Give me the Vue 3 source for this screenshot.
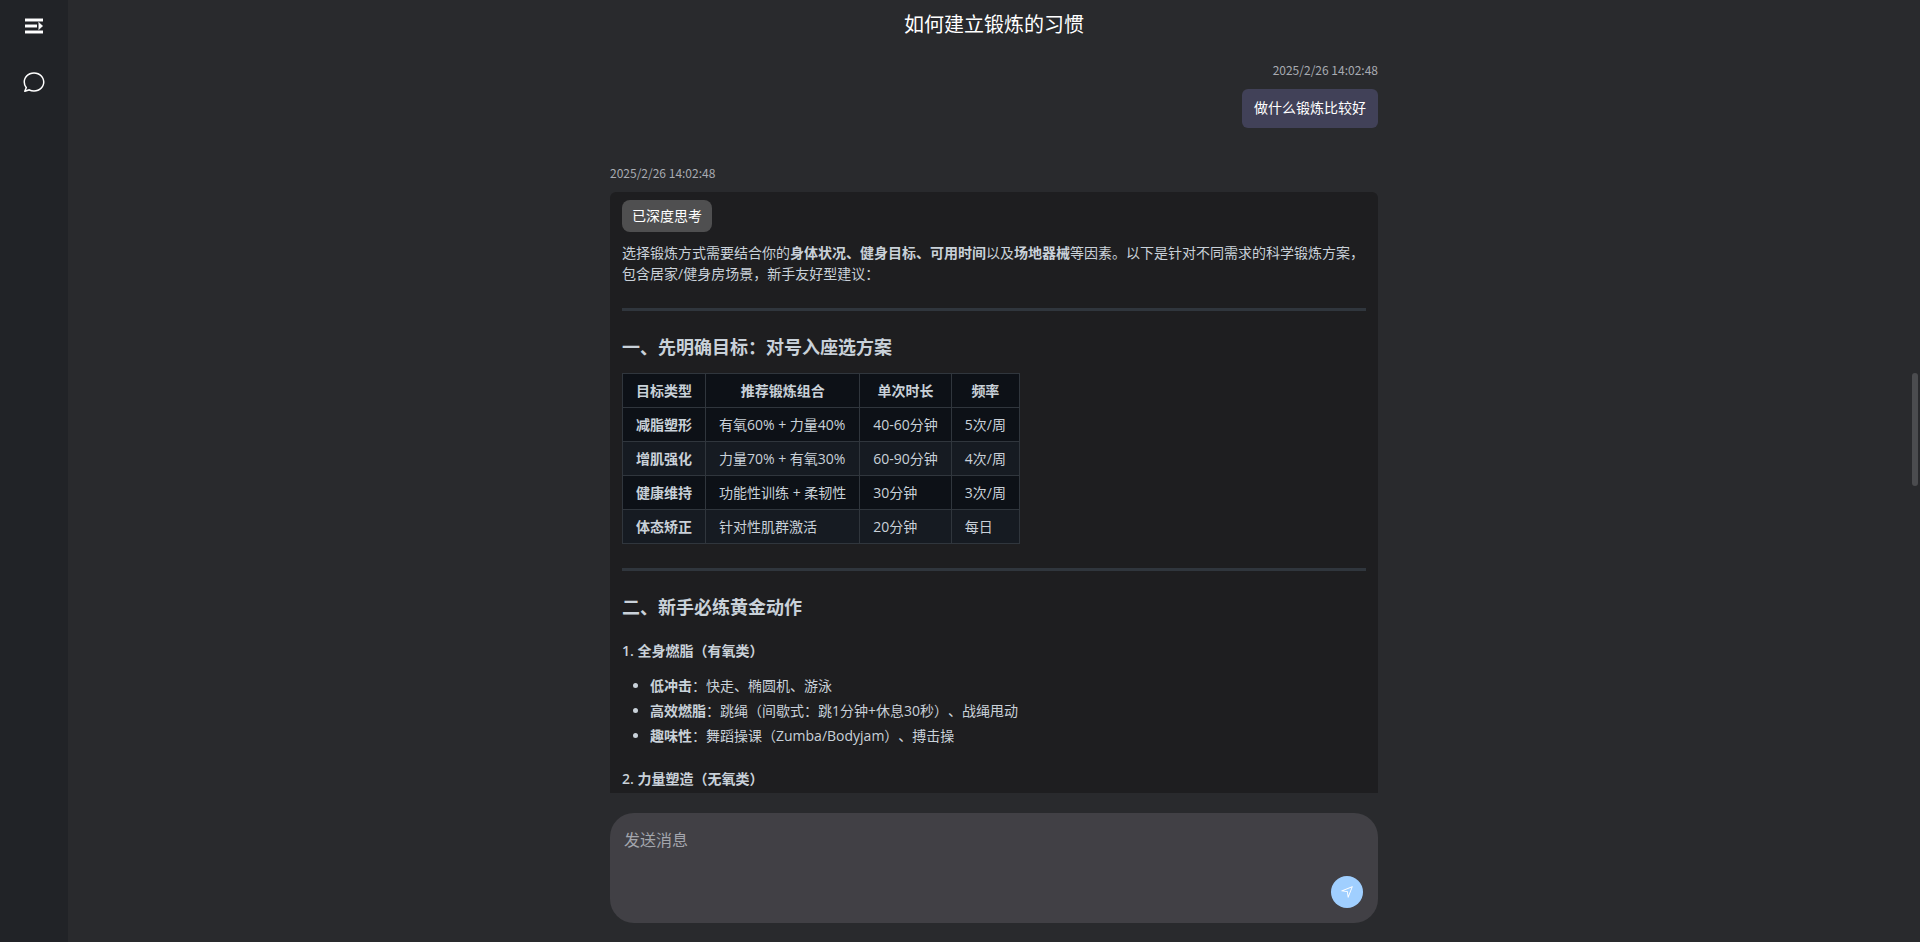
<script setup>
import { ref } from 'vue'

const message = ref('')
const headers = ['目标类型', '推荐锻炼组合', '单次时长', '频率']
const rows = [
  ['减脂塑形', '有氧60% + 力量40%', '40-60分钟', '5次/周'],
  ['增肌强化', '力量70% + 有氧30%', '60-90分钟', '4次/周'],
  ['健康维持', '功能性训练 + 柔韧性', '30分钟', '3次/周'],
  ['体态矫正', '针对性肌群激活', '20分钟', '每日']
]
const cardio = [
  ['低冲击', '快走、椭圆机、游泳'],
  ['高效燃脂', '跳绳（间歇式：跳1分钟+休息30秒）、战绳甩动'],
  ['趣味性', '舞蹈操课（Zumba/Bodyjam）、搏击操']
]
</script>

<template>
  <div class="layout">
    <nav class="sidebar">
      <button class="icon-button menu" type="button" aria-label="展开菜单">
        <svg width="18" height="16" viewBox="0 0 18 16" fill="#fff">
          <path d="M0 0h18v4H0zM0 6h12v4H0zM0 12h18v4H0z" fill="#8b8c8f" />
          <path d="M0 1h18v2H0zM0 7h12v2H0zM0 13h18v2H0z" />
          <path d="M13 4h1l4 4-4 4h-1z" fill="#8b8c8f" />
          <path d="M14 4.8 17.8 8 14 11.2z" />
        </svg>
      </button>
      <button class="icon-button" type="button" aria-label="对话">
        <svg width="24" height="24" viewBox="0 0 1024 1024" fill="#fff">
          <path d="m174.72 855.68 130.048-43.392 23.424 11.392C382.4 849.984 444.352 864 512 864c223.744 0 384-159.872 384-352 0-192.832-159.104-352-384-352S128 319.168 128 512a341.12 341.12 0 0 0 69.248 204.288l21.632 28.8-44.16 110.592zm-45.248 82.56A32 32 0 0 1 89.6 896l56.512-141.248A405.12 405.12 0 0 1 64 512C64 299.904 235.648 96 512 96s448 203.904 448 416-173.44 416-448 416c-79.68 0-150.848-17.152-211.712-46.72l-170.88 56.96z" />
        </svg>
      </button>
    </nav>

    <main class="main">
      <h1 class="title">如何建立锻炼的习惯</h1>

      <section class="scroll">
        <div class="column">
          <article class="message user">
            <time class="time">2025/2/26 14:02:48</time>
            <div class="bubble">做什么锻炼比较好</div>
          </article>

          <article class="message">
            <time class="time">2025/2/26 14:02:48</time>
            <div class="card">
              <button class="thought" type="button">已深度思考</button>
              <p>选择锻炼方式需要结合你的<strong>身体状况、健身目标、可用时间</strong>以及<strong>场地器械</strong>等因素。以下是针对不同需求的科学锻炼方案，包含居家/健身房场景，新手友好型建议：</p>
              <hr />
              <h3>一、先明确目标：对号入座选方案</h3>
              <table>
                <thead>
                  <tr>
                    <th v-for="h in headers" :key="h" scope="col">{{ h }}</th>
                  </tr>
                </thead>
                <tbody>
                  <tr v-for="row in rows" :key="row[0]">
                    <td v-for="(cell, i) in row" :key="i">
                      <strong v-if="i === 0">{{ cell }}</strong>
                      <template v-else>{{ cell }}</template>
                    </td>
                  </tr>
                </tbody>
              </table>
              <hr />
              <h3>二、新手必练黄金动作</h3>
              <h4>1. 全身燃脂（有氧类）</h4>
              <ul>
                <li v-for="item in cardio" :key="item[0]"><strong>{{ item[0] }}</strong>：{{ item[1] }}</li>
              </ul>
              <h4>2. 力量塑造（无氧类）</h4>
            </div>
          </article>
        </div>
      </section>

      <form class="composer" @submit.prevent>
        <textarea v-model="message" placeholder="发送消息" aria-label="发送消息"></textarea>
        <button class="send" type="submit" aria-label="发送">
          <svg width="14" height="14" viewBox="0 0 1024 1024" fill="#fff">
            <path d="m249.6 417.088 319.744 43.072 39.168 310.272L845.12 178.88 249.6 417.088zm-129.024 47.168a32 32 0 0 1-7.68-61.44l777.792-311.04a32 32 0 0 1 41.6 41.6l-310.336 775.68a32 32 0 0 1-61.44-7.808L512 516.992l-391.424-52.736z" />
          </svg>
        </button>
      </form>
      <div class="thumb"></div>
    </main>
  </div>
</template>

<style>
body {
  margin: 0;
  background: #292a2d;
}
</style>

<style scoped>
.layout {
  display: flex;
  height: 100vh;
  background: #292a2d;
  color: #c9d1d9;
  font-family: "Open Sans", "Noto Sans CJK SC", sans-serif;
  font-size: 14px;
  line-height: 21px;
  text-spacing-trim: space-all;
}
button,
textarea {
  border: 0;
  padding: 0;
  font-family: inherit;
}
svg {
  display: block;
}
.sidebar {
  flex: none;
  display: flex;
  flex-direction: column;
  align-items: center;
  gap: 36px;
  width: 68px;
  padding-top: 18px;
  box-sizing: border-box;
  background: #212327;
}
.icon-button {
  background: none;
  cursor: pointer;
}
.main {
  position: relative;
  flex: 1;
  min-width: 0;
  display: flex;
  flex-direction: column;
  align-items: center;
}
.title {
  flex: none;
  margin: 0;
  font-size: 20px;
  font-weight: 400;
  line-height: 50px;
  color: #fff;
}
.scroll {
  flex: 1;
  min-height: 0;
  width: 100%;
  overflow: hidden;
}
.column {
  max-width: 768px;
  margin: 0 auto;
  padding-top: 11px;
  display: flex;
  flex-direction: column;
  gap: 36px;
}
.message {
  display: flex;
  flex-direction: column;
  gap: 10px;
}
.user {
  align-items: flex-end;
}
.time {
  font-family: "Noto Sans CJK SC", sans-serif;
  font-size: 12px;
  line-height: 18px;
  color: #a8abb2;
}
.bubble {
  padding: 8px 12px 10px;
  border-radius: 6px;
  background: #414158;
  color: #fff;
}
.card {
  padding: 8px 12px 40px;
  border-radius: 6px;
  background: #1e1e20;
}
.thought {
  display: block;
  height: 32px;
  padding: 0 10px 2px;
  border-radius: 8px;
  background: #4f4f50;
  color: #fff;
  font-size: 14px;
}
p {
  margin: 10px 0 0;
}
strong {
  font-weight: 600;
}
hr {
  height: 3px;
  margin: 24px 0;
  border: 0;
  background: #30363d;
}
h3 {
  margin: 25px 0 15px;
  font-size: 18px;
  line-height: 22px;
  font-weight: 600;
}
h4 {
  margin: 24px 0 15px;
  font-size: 14px;
  line-height: 18px;
  font-weight: 600;
}
table {
  border-collapse: collapse;
}
th,
td {
  padding: 6px 13px;
  border: 1px solid #30363d;
}
th {
  font-weight: 600;
}
tr {
  background: #0d1117;
}
tbody tr:nth-child(2n) {
  background: #161b22;
}
ul {
  margin: 0;
  padding-left: 28px;
}
li + li {
  margin-top: 4px;
}
.composer {
  flex: none;
  position: relative;
  width: 100%;
  max-width: 768px;
  margin: 20px 0 19px;
  border-radius: 24px;
  background: #414045;
}
textarea {
  display: block;
  box-sizing: border-box;
  width: 100%;
  height: 110px;
  padding: 15px 60px 15px 14px;
  background: none;
  color: #fff;
  font-size: 16px;
  line-height: 24px;
  resize: none;
  outline: none;
}
textarea::placeholder {
  color: #a3a6ad;
  opacity: 1;
}
.send {
  position: absolute;
  right: 15px;
  bottom: 15px;
  display: flex;
  align-items: center;
  justify-content: center;
  width: 32px;
  height: 32px;
  border-radius: 50%;
  background: #a0cfff;
}
/* Floating scroll thumb over the message list */
.thumb {
  position: absolute;
  top: 373px;
  right: 2px;
  width: 6px;
  height: 113px;
  border-radius: 3px;
  background: #4b4c4f;
}
</style>
